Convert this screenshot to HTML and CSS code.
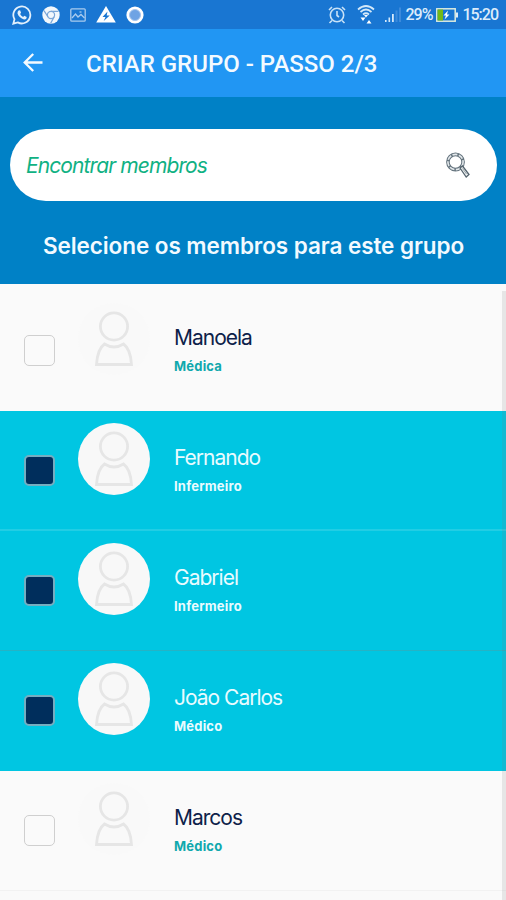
FILE: index.html
```html
<!DOCTYPE html>
<html lang="pt-BR">
<head>
  <meta charset="utf-8">
  <title>Criar grupo</title>
  <link rel="stylesheet" href="styles.css">
</head>
<body>
  <svg class="defs">
    <symbol id="person" viewBox="0 0 72 72">
      <circle cx="36" cy="23.500" r="13.6"/>
      <path d="M26.500 41q9.500 6 19 0q7 5 8 20.500h-35q1-15.500 8-20.500z"/>
    </symbol>
  </svg>

  <div class="status-bar">
    <div class="notifications">
      <svg width="20" height="20" viewBox="0 0 20 20">
        <path d="M1.3 18.7l1.2-4.5a8.5 8.5 0 1 1 3.3 3.2z" fill="none" stroke="#e3f0fc" stroke-width="1.8"/>
        <path d="M6.5 5.5l1.6-.2 1 2.4-1 1.3q1 2 3 2.9l1.2-1.2 2.4 1.2-.3 1.5q-1 1.4-3 .9Q7 12.800 5.500 8.500 5.400 6.500 6.500 5.500z" fill="#e3f0fc"/>
      </svg>
      <svg width="18" height="18" viewBox="0 0 18 18">
        <circle cx="9" cy="9" r="8.700" fill="#f2f7fc"/>
        <circle cx="9" cy="9" r="3.600" fill="none" stroke="#7aa6d8" stroke-width="1.200"/>
        <path d="M9 5.400h7.500M6 11L2 4.600M12.200 10.800L8.600 17.400" stroke="#7aa6d8" stroke-width="1.200"/>
      </svg>
      <svg width="16" height="14" viewBox="0 0 16 14" fill="none" stroke="#a9cbee" stroke-width="1.300">
        <rect x=".8" y=".8" width="14.400" height="12.400" rx="1"/>
        <path d="M2 10l3.500-4 2.500 3 3-2.500 3.500 3.500"/>
        <path d="M9.500 4h2"/>
      </svg>
      <svg width="20" height="17" viewBox="0 0 20 17">
        <path d="M10 0l9.800 16.500H.2z" fill="#fff"/>
        <path d="M11.500 5.500l-5 5.500h3l-1.800 4 6-5.500h-3z" fill="#1976d2"/>
      </svg>
      <svg width="18" height="18" viewBox="0 0 18 18">
        <circle cx="9" cy="9" r="8.600" fill="#fff"/>
        <circle cx="9" cy="9" r="5.500" fill="#6ea3e4" stroke="#a6c5ee"/>
      </svg>
    </div>
    <div class="indicators">
      <svg class="alarm" width="18" height="18" viewBox="0 0 18 18" fill="none" stroke="#c9e2f7" stroke-width="1.600">
        <circle cx="9" cy="9" r="6.700"/>
        <path d="M9 5v4.500l2 1.500M1 4l3-3M17 4l-3-3M4 14.500l-2.500 2.500M14 14.500l2.500 2.500"/>
      </svg>
      <svg class="wifi" width="18" height="19" viewBox="0 0 18 19">
        <g fill="none" stroke="#d3e8f9" stroke-width="1.700">
          <path d="M1 4.500q8-7 16 0M3.500 7q5.500-5 11 0M6 9.500q3-2.500 6 0"/>
        </g>
        <path d="M9 12.500L7 10h4zM3.500 12.500h5L6 16zM9.500 18.500h5L12 15z" fill="#fff"/>
      </svg>
      <svg class="signal" width="18" height="16" viewBox="0 0 18 16">
        <path d="M1 13h1.600v2H1zM4.500 10.500h1.600V15H4.500zM8 7h1.800v8H8z" fill="#d5e9fb"/>
        <path d="M11.500 3.500h2V15h-2zM15 .5h2V15h-2z" fill="#3c8adb"/>
      </svg>
      <span class="percent">29%</span>
      <svg class="battery" width="22" height="14" viewBox="0 0 22 14">
        <rect x=".8" y=".8" width="18.400" height="12.400" fill="none" stroke="#dcecdf" stroke-width="1.500"/>
        <rect x="1.500" y="1.500" width="5.500" height="11" fill="#73b818"/>
        <path d="M20 4.500h2v5h-2z" fill="#dcecfa"/>
        <path d="M12 2.500L7.500 7.500h2.500l-1.500 4 5-5H11z" fill="#fff"/>
      </svg>
      <span class="clock">15:20</span>
    </div>
  </div>

  <header class="app-bar">
    <svg class="back" width="20" height="20" viewBox="0 0 20 20" fill="none" stroke="#f3faff" stroke-width="2.300">
      <path d="M19.500 9.500H2M10.200 1L1.700 9.500l8.500 8.500"/>
    </svg>
    <h1>CRIAR GRUPO - PASSO 2/3</h1>
  </header>

  <section class="search-panel">
    <div class="search-box">
      <span class="placeholder">Encontrar membros</span>
      <svg width="24" height="27" viewBox="0 0 24 27" fill="none">
        <circle cx="9.500" cy="10" r="7.600" stroke="#65747e" stroke-width="3.600"/>
        <circle cx="9.500" cy="10" r="7.600" stroke="#e3e8eb" stroke-width="1.600" stroke-dasharray="5 1.500"/>
        <path d="M14 16l2.500-2 6.500 8.500-2.800 2.500z" fill="#eef1f2" stroke="#56656f" stroke-width="1.300"/>
        <path d="M16.500 16.500l4 5.500" stroke="#9aa5ab"/>
      </svg>
    </div>
    <h2>Selecione os membros para este grupo</h2>
  </section>

  <main class="members">
    <div class="member">
      <span class="checkbox"></span>
      <svg class="avatar"><use href="#person"/></svg>
      <div class="info">
        <div class="name">Manoela</div>
        <div class="role">Médica</div>
      </div>
    </div>
    <div class="member selected light-line">
      <span class="checkbox"></span>
      <svg class="avatar"><use href="#person"/></svg>
      <div class="info">
        <div class="name">Fernando</div>
        <div class="role">Infermeiro</div>
      </div>
    </div>
    <div class="member selected dark-line">
      <span class="checkbox"></span>
      <svg class="avatar"><use href="#person"/></svg>
      <div class="info">
        <div class="name">Gabriel</div>
        <div class="role">Infermeiro</div>
      </div>
    </div>
    <div class="member selected">
      <span class="checkbox"></span>
      <svg class="avatar"><use href="#person"/></svg>
      <div class="info">
        <div class="name">João Carlos</div>
        <div class="role">Médico</div>
      </div>
    </div>
    <div class="member">
      <span class="checkbox"></span>
      <svg class="avatar"><use href="#person"/></svg>
      <div class="info">
        <div class="name">Marcos</div>
        <div class="role">Médico</div>
      </div>
    </div>
    <div class="scrollbar"></div>
  </main>
</body>
</html>
```
FILE: styles.css
```css
* { box-sizing: border-box; }
body { margin: 0; height: 900px; overflow: hidden; display: flex; flex-direction: column; font-family: Inter, sans-serif; background: #fafafa; }
h1, h2 { margin: 0; }
svg { display: block; flex: none; }
.defs { position: absolute; width: 0; height: 0; }

.status-bar { height: 29px; flex: none; display: flex; justify-content: space-between; align-items: center; padding: 0 8px 0 12px; background: #1976d2; color: #dcecfb; font-family: Roboto, sans-serif; font-size: 16px; font-weight: 500; }
.notifications { display: flex; align-items: center; gap: 10px; }
.indicators { display: flex; align-items: center; }
.wifi { margin-left: 11px; }
.signal { margin-left: 9px; }
.percent { margin-left: 3px; letter-spacing: -1px; }
.battery { margin-left: 4px; }
.clock { margin-left: 4px; letter-spacing: -1px; }

.app-bar { height: 68px; flex: none; display: flex; align-items: center; padding-left: 23px; background: #2196f3; }
.app-bar h1 { margin-left: 43px; padding-top: 1px; color: #f3faff; font: 500 24px Roboto, sans-serif; white-space: nowrap; }

.search-panel { height: 187px; flex: none; padding: 32px 9px 0 10px; background: #0081c6; }
.search-box { height: 72px; display: flex; align-items: center; justify-content: space-between; padding: 0 27px 0 16px; border-radius: 36px; background: #fff; }
.placeholder { color: #10b183; font-size: 21px; font-style: italic; letter-spacing: -0.9px; }
.search-panel h2 { margin-top: 31px; text-align: center; color: #f2faff; font-size: 22.5px; font-weight: 600; line-height: 28px; letter-spacing: -0.07px; white-space: nowrap; }

.members { position: relative; flex: 1; padding-top: 7px; }
.member { height: 120px; display: flex; align-items: flex-start; padding: 12px 0 0 24px; border-bottom: 1px solid #f2f2f2; }
.member:first-child { border-bottom-color: #fafafa; }
.checkbox { width: 31px; height: 31px; margin-top: 32px; border: 1px solid #cfcfcf; border-radius: 5px; background: #fafafa; }
.avatar { width: 72px; height: 72px; margin-left: 23px; border-radius: 50%; background: #f9f9f9; fill: none; stroke: #e6e6e6; stroke-width: 2.8; }
.info { margin-left: 24px; padding-top: 21px; }
.name { color: #0d2149; font-size: 21px; line-height: 28px; letter-spacing: -1px; }
.role { margin-top: 5px; color: #10a8ad; font-size: 13px; font-weight: 700; line-height: 18px; letter-spacing: 0.2px; }

.selected { background: #00c6e2; border-bottom-color: #00c6e2; }
.selected.light-line { border-bottom: 2px solid #22cde4; }
.selected.dark-line { border-bottom: 1px solid #25b3c5; }
.selected .checkbox { border: 2px solid #75adc0; background: #002e5c; }
.selected .avatar { background: #f8f8f8; }
.selected .name, .selected .role { color: #e9fbff; }

.scrollbar { position: absolute; top: 7px; right: 0; bottom: 0; width: 4px; background: rgba(120, 120, 120, 0.15); }
```
